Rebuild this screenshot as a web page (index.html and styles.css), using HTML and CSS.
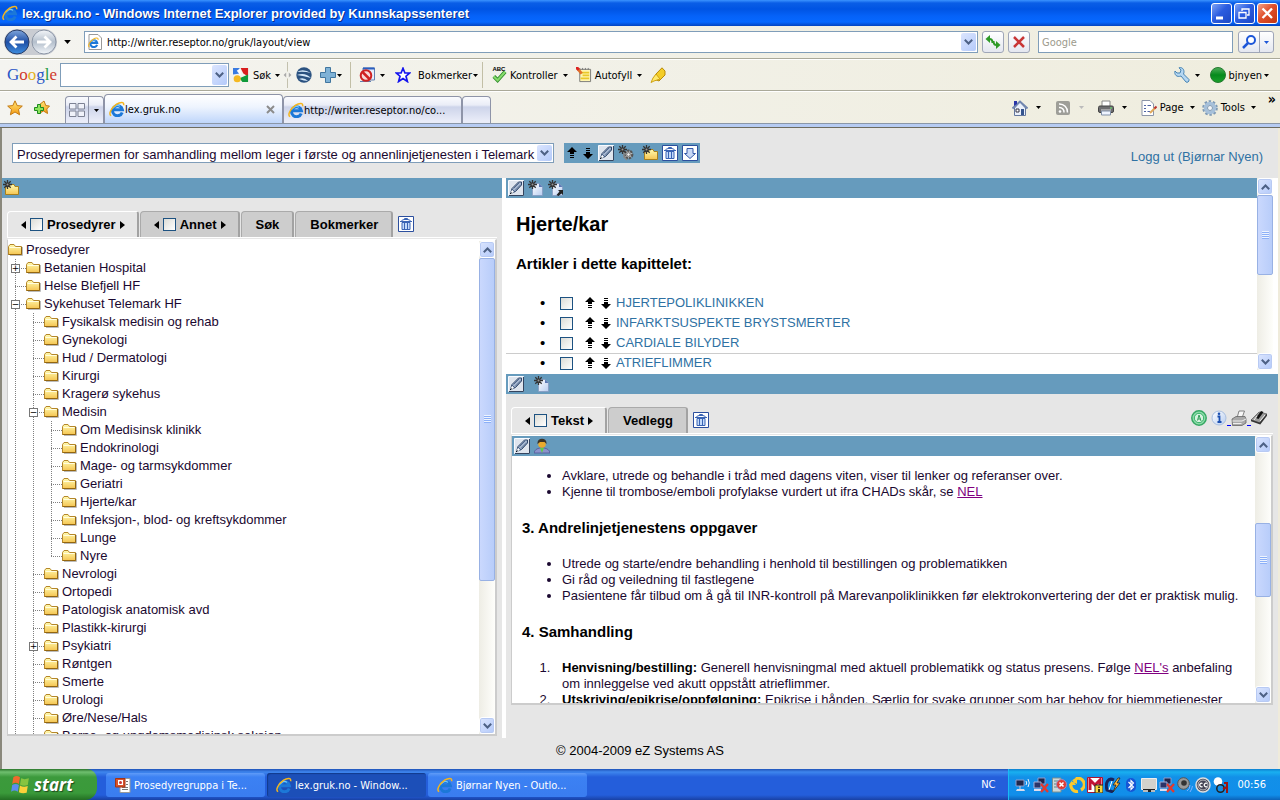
FILE: index.html
```html
<!DOCTYPE html>
<html lang="no">
<head>
<meta charset="utf-8">
<title>lex.gruk.no</title>
<link rel="stylesheet" href="styles.css">
</head>
<body>
<svg class="defs" aria-hidden="true">
  <defs>
    <linearGradient id="gFolder" x1="0" y1="0" x2="0" y2="1"><stop offset="0" stop-color="#fffbb0"/><stop offset="1" stop-color="#f5c552"/></linearGradient>
    <linearGradient id="gBlue" x1="0" y1="0" x2="0" y2="1"><stop offset="0" stop-color="#7fa6dc"/><stop offset=".5" stop-color="#1f4fa6"/><stop offset="1" stop-color="#3f8fe0"/></linearGradient>
    <linearGradient id="gSilver" x1="0" y1="0" x2="0" y2="1"><stop offset="0" stop-color="#f4f6f9"/><stop offset=".5" stop-color="#b4bfcc"/><stop offset="1" stop-color="#f2f6fa"/></linearGradient>
    <linearGradient id="gStar" x1="0" y1="0" x2="0" y2="1"><stop offset="0" stop-color="#ffe77a"/><stop offset="1" stop-color="#f59a10"/></linearGradient>
    <linearGradient id="gPage" x1="0" y1="0" x2="1" y2="1"><stop offset="0" stop-color="#fff"/><stop offset="1" stop-color="#b8cdf0"/></linearGradient>
    <linearGradient id="gGreen" x1="0" y1="0" x2="0" y2="1"><stop offset="0" stop-color="#4fae5a"/><stop offset=".5" stop-color="#068a1c"/><stop offset="1" stop-color="#1ba02c"/></linearGradient>
  </defs>
  <symbol id="ie" viewBox="0 0 16 16"><path d="M13.200 11.400A5 5 0 1 1 13.400 8.800H4.800" fill="none" stroke="#1c78d8" stroke-width="3"/><path d="M4.200 7.400A4.300 4.300 0 0 1 11 5.400" fill="none" stroke="#6fc6ff" stroke-width="1.200"/><path d="M2.200 14.600C-1 13.600 2 7 7.600 3.200 11 1 15.600 .4 14.600 4.200" fill="none" stroke="#f4b51e" stroke-width="1.500"/></symbol>
  <symbol id="folder" viewBox="0 0 16 16"><path d="M2 13.500H14.500V5" fill="none" stroke="#bbb" stroke-width="1"/><path d="M.5 12.500V4.500L2 2.500H6L7.500 4.500H13.500V12.500Z" fill="url(#gFolder)" stroke="#b5872a"/><path d="M1.500 5.500H12.500" stroke="#fffde0"/><path d="M.5 12.500H13.500V5" fill="none" stroke="#94660f"/></symbol>
  <symbol id="spark" viewBox="0 0 9 9"><path d="M4.500 0V9M0 4.500H9M1.300 1.300 7.700 7.700M7.700 1.300 1.300 7.700" stroke="#333" stroke-width="1.300"/><circle cx="4.500" cy="4.500" r="1" fill="#999"/></symbol>
  <symbol id="newfolder" viewBox="0 0 16 16"><path d="M2.500 14.500V7.500L8 4.500H11L12 6.500H15.500V14.500Z" fill="url(#gFolder)" stroke="#a8801c"/><use href="#spark" x="0" y="0" width="9" height="9"/></symbol>
  <symbol id="newpage" viewBox="0 0 16 16"><path d="M4.500 15.500V3.500H11L14.500 7V15.500Z" fill="url(#gPage)" stroke="#8395bd" stroke-width=".7"/><path d="M11 3.500V7H14.500Z" fill="#5b79b5"/><use href="#spark" x="0" y="0" width="9" height="9"/></symbol>
  <symbol id="newlink" viewBox="0 0 16 16"><use href="#newpage" width="16" height="16"/><path d="M8.500 15 11.500 11.500 10 10H15V15L13.500 13.500 10.500 16Z" fill="#222"/></symbol>
  <symbol id="gears" viewBox="0 0 16 16"><circle cx="10.500" cy="9.500" r="3.800" fill="#c8c8c8" stroke="#555" stroke-width="2.200" stroke-dasharray="2.400 .8"/><circle cx="10.500" cy="9.500" r="1.800" fill="#eee" stroke="#555" stroke-width=".8"/><path d="M6 7V12L9 15" fill="none" stroke="#888" stroke-width="1.500"/><use href="#spark" x="0" y="0" width="9" height="9"/></symbol>
  <symbol id="pencil" viewBox="0 0 16 16"><path d="M.5 .5H15.500V15.500H.5Z" fill="#dfe5ee" stroke="#f8faff"/><path d="M1 15.500H15.500V1" fill="none" stroke="#34445e"/><path d="M2.500 13.500 4 8.500 10.500 2H13.500V5L7.500 11.500Z" fill="#a5b6cf" stroke="#2e4568"/><path d="M4 9 7 12M5.500 8.500 11 3M7 10.500 13 4.500" stroke="#39537c" stroke-width=".8"/><path d="M2 14 4 10 6 12Z" fill="#fff"/><path d="M2 14 3.500 12.500" stroke="#111"/></symbol>
  <symbol id="trash" viewBox="0 0 16 16"><path d="M.5 .5H15.500V15.500H.5Z" fill="#fff" stroke="#2c4f9e"/><path d="M4 6.500H12V13.500H4Z" fill="#c3dafa" stroke="#3a64b4"/><path d="M2 5.500H14M3.500 4.500 6 3.500H10L12.500 4.500M6.500 3V2.500H9.500V3M6.500 7V13M9.500 7V13" fill="none" stroke="#3a64b4"/></symbol>
  <symbol id="getdown" viewBox="0 0 16 16"><path d="M.5 .5H15.500V15.500H.5Z" fill="#fff" stroke="#2c4f9e"/><path d="M5 3.500H11V8.500H13.500L8 13.500 2.500 8.500H5Z" fill="#c9d9f5" stroke="#3459a8"/></symbol>
  <symbol id="up" viewBox="0 0 12 14"><path d="M6 1 11 6H8V8H4V6H1ZM4 9H8V10H4ZM4 11H8V12H4Z"/></symbol>
  <symbol id="down" viewBox="0 0 12 14"><path d="M6 13 1 8H4V6H8V8H11ZM4 4H8V5H4ZM4 2H8V3H4Z"/></symbol>
  <symbol id="prev" viewBox="0 0 5 8"><path d="M5 0V8L0 4Z"/></symbol>
  <symbol id="next" viewBox="0 0 5 8"><path d="M0 0V8L5 4Z"/></symbol>
  <symbol id="caret" viewBox="0 0 5 3"><path d="M0 0H5L2.500 3Z"/></symbol>
  <symbol id="chevD" viewBox="0 0 9 6"><path d="M.8 .8 4.500 4.500 8.200 .8" fill="none" stroke="#4d6185" stroke-width="2"/></symbol>
  <symbol id="chevU" viewBox="0 0 9 6"><path d="M.8 5.200 4.500 1.500 8.200 5.200" fill="none" stroke="#4d6185" stroke-width="2"/></symbol>
  <symbol id="person" viewBox="0 0 16 16"><path d="M0 15C1 11 4 10 8 10S15 11 16 15Z" fill="#8b93cc" stroke="#4c4f8f" stroke-width=".7"/><path d="M6 10H10L8 15Z" fill="#5ecb4e"/><circle cx="8" cy="6" r="3.800" fill="#e9aa2e"/><path d="M3.500 6C2.500-1 13.500-1 12.500 6L10.500 4H6Z" fill="#3b3327"/></symbol>
  <symbol id="stamp" viewBox="0 0 16 16"><circle cx="8" cy="8" r="7.200" fill="#8fdcab" stroke="#35a863" stroke-width="1.500"/><circle cx="8" cy="8" r="4.700" fill="#d7f2e0" stroke="#35b368"/><path d="M6.500 10.500 8 5 10 11M7 9H9.500" fill="none" stroke="#2f9f58"/></symbol>
  <symbol id="info" viewBox="0 0 16 16"><circle cx="8" cy="8" r="7" fill="url(#gPage)" stroke="#a9bfe0"/><path d="M6.500 6.500H8.500V12M6.500 12H10.500" fill="none" stroke="#1b4fb0" stroke-width="1.800"/><circle cx="8" cy="3.800" r="1.300" fill="#1b4fb0"/></symbol>
  <symbol id="print" viewBox="0 0 16 16"><path d="M6 8 8 1H13.500L11 8Z" fill="#f7f7f7" stroke="#666" stroke-width=".8"/><path d="M1 9 5 6.500H14L15 9V13L11 15.500H1.500Z" fill="#a9a9a9" stroke="#666" stroke-width=".8"/><path d="M1.500 11H11L15 9M2 13.500H10.500" fill="none" stroke="#eee"/></symbol>
  <symbol id="book" viewBox="0 0 16 16"><path d="M0 10 8 2 16 4 9 13Z" fill="#999" stroke="#555" stroke-width=".7"/><path d="M0 10.500 9 13.500 16 4.500" fill="none" stroke="#333" stroke-width="1.500"/><path d="M5 8 10 1 12.500 2 7.500 9Z" fill="#111"/><path d="M3 10 6 6M9 11 14 5" stroke="#eee"/></symbol>
  <symbol id="gicon" viewBox="0 0 17 17"><path d="M0 1H7V7L0 8Z" fill="#3a7be0"/><path d="M8 1H16V10L11 7Z" fill="#d81e1e"/><path d="M16 8V16H10L7 12Z" fill="#0f9a3a"/><circle cx="4.500" cy="12.500" r="3.800" fill="#f5b921"/><path d="M4 4 8 1V9Z" fill="#fff"/></symbol>
  <symbol id="globe" viewBox="0 0 16 16"><circle cx="8" cy="8" r="7.700" fill="#2b5280"/><path d="M1 5Q7 1 15 6Q8 4 1 5ZM1 8Q9 5 15 11Q8 9 1 8ZM3 12Q8 10 12 14Q8 14 3 12Z" fill="#d5e8f8"/></symbol>
  <symbol id="plus" viewBox="0 0 16 16"><path d="M5.500 .5H10.500V5.500H15.500V10.500H10.500V15.500H5.500V10.500H.5V5.500H5.500Z" fill="#7fb2d6" stroke="#41769f"/></symbol>
  <symbol id="block" viewBox="0 0 16 16"><path d="M4 1H15.500V13H4Z" fill="#e8eefb" stroke="#6480b0"/><path d="M4 1.500H15.500" stroke="#2a5fc0" stroke-width="2"/><path d="M1 14.500H12" stroke="#6480b0"/><circle cx="7" cy="8.500" r="5.300" fill="#f7dada" stroke="#cf2222" stroke-width="2"/><path d="M3.500 5 10.500 12" stroke="#cf2222" stroke-width="2.500"/></symbol>
  <symbol id="starline" viewBox="0 0 16 16"><path d="M8 1.300 9.900 6H14.800L11 9.200 12.400 14.500 8 11.500 3.600 14.500 5 9.200 1.200 6H6.100Z" fill="#fff" stroke="#1414ee" stroke-width="1.700"/></symbol>
  <symbol id="star" viewBox="0 0 16 16"><path d="M8 .8 10.200 5.600 15.300 6.100 11.500 9.500 12.600 14.800 8 12 3.400 14.800 4.500 9.500 .7 6.100 5.800 5.600Z" fill="url(#gStar)" stroke="#c47a12"/></symbol>
  <symbol id="addstar" viewBox="0 0 16 16"><path d="M10 1 11.800 5.600 15.500 6 12.800 9 13.500 13.500 9.500 11 6 13 5 5Z" fill="url(#gStar)" stroke="#c47a12"/><path d="M3.500 4.500H6.500V7.500H9.500V10.500H6.500V13.500H3.500V10.500H.5V7.500H3.500Z" fill="#8ce45c" stroke="#1e8a1e"/></symbol>
  <symbol id="tickabc" viewBox="0 0 17 17"><path d="M3 10 7 14 15 5" fill="none" stroke="#2d8a2a" stroke-width="4"/><path d="M3 10 7 14 15 5" fill="none" stroke="#86db6c" stroke-width="2.200"/></symbol>
  <symbol id="note" viewBox="0 0 17 17"><path d="M4 2.500H15.500V15.500H4Z" fill="#fff5b0" stroke="#777"/><path d="M4 1V3M7 1V3M10 1V3M13 1V3" stroke="#777"/><path d="M5 6H14M7 9H14M5 12H14" stroke="#eac82a" stroke-width="1.800"/><path d="M1 1 6 7" stroke="#e0702a" stroke-width="3"/><path d="M0 0 3 3" stroke="#d22" stroke-width="3"/></symbol>
  <symbol id="marker" viewBox="0 0 16 16"><path d="M6 7 12 .8 15 4V8L9 14 4 12Z" fill="#f4cd27" stroke="#b98a08"/><path d="M6 7 10 12 4 14 1 15.500 3 11Z" fill="#ffe96a" stroke="#cfa214"/></symbol>
  <symbol id="wrench" viewBox="0 0 16 16"><path d="M1 4 3 6H6L7 3 5 .8C9-.5 11 4 9.500 7L15 12.500C15.500 15 13 15.800 12 15L7 9C3 10.500 0 8 1 4Z" fill="#b5d7f2" stroke="#4683b3"/></symbol>
  <symbol id="home" viewBox="0 0 16 16"><path d="M2.500 8V15.500H13.500V8L8 2Z" fill="#eaf0fb" stroke="#63779e"/><path d="M.5 8.500 8 1.500 15.500 8.500" fill="none" stroke="#7186b0" stroke-width="2"/><path d="M2 1H5V4L2 6Z" fill="#2b36a8"/><path d="M4 9H7V12H4Z" fill="#fff" stroke="#334"/><path d="M9 9H12V15H9Z" fill="#35548e"/></symbol>
  <symbol id="rss" viewBox="0 0 16 16"><rect x="1" y="1" width="14" height="14" rx="2" fill="#9e9e98"/><circle cx="5" cy="11.500" r="1.300" fill="#fff"/><path d="M4 7.500A4.500 4.500 0 0 1 9 12.500M4 4A8 8 0 0 1 12.500 12.500" fill="none" stroke="#fff" stroke-width="1.500"/></symbol>
  <symbol id="printer" viewBox="0 0 16 16"><path d="M4 1H12V7H4Z" fill="#fff" stroke="#888"/><rect x=".5" y="6" width="15" height="6.500" rx="1.500" fill="#6d6d70" stroke="#444"/><path d="M3 10H13" stroke="#ddd"/><path d="M3.500 11H12.500V15H3.500Z" fill="#eef4ff" stroke="#8090a8"/><circle cx="13" cy="8" r=".8" fill="#6f6"/></symbol>
  <symbol id="pageedit" viewBox="0 0 16 16"><path d="M1 .5H9L12.500 4V15.500H1Z" fill="#fff" stroke="#8c95a8"/><path d="M3 5.500H5M6.500 5.500H10M3 8.500H5M3 11.500H5M6.500 11.500H9" stroke="#4f64a4"/><path d="M9 13 14.500 7.500" stroke="#e0a85c" stroke-width="2"/><path d="M13.500 8.500 15.500 6.500" stroke="#b33" stroke-width="2"/></symbol>
  <symbol id="gear" viewBox="0 0 16 16"><circle cx="8" cy="8" r="6.500" fill="none" stroke="#7e99b4" stroke-width="2.600" stroke-dasharray="2.400 1.680"/><circle cx="8" cy="8" r="4.500" fill="none" stroke="#a6c0da" stroke-width="3.400"/><circle cx="8" cy="8" r="2.500" fill="#f4f6f8" stroke="#7e99b4"/></symbol>
  <symbol id="winflag" viewBox="0 0 18 18"><path d="M3 2Q6 0 9 2L8 8Q5 6 2 8Z" fill="#ef6a2d"/><path d="M10 3Q13 4.500 17 3L16 9Q12 10.500 9 8.500Z" fill="#86c440"/><path d="M2 9Q5 7 8 9L7 15Q4 13 1 15Z" fill="#5c8df0"/><path d="M9 9.500Q12 11.500 16 10L15 16Q11 17 8 15.500Z" fill="#fbd13a"/></symbol>
  <symbol id="ppt" viewBox="0 0 16 16"><path d="M5 1.500H15V15.500H5Z" fill="#fff" stroke="#999"/><path d="M7 10.500H13M7 12.500H13M11 4.500H13M11 7.500H13" stroke="#777"/><path d="M.5 1.500H10V10H.5Z" fill="#d8532c" stroke="#a33313"/><path d="M3 3H8V8H3Z" fill="#fff"/><circle cx="5.500" cy="5.500" r="1.500" fill="#c33"/></symbol>
  <symbol id="net" viewBox="0 0 16 16"><path d="M1 3H9V9H1Z" fill="#20264a" stroke="#8c9ccc"/><path d="M2 12H9L10 14H1Z" fill="#d8dcec"/><path d="M5 9V12" stroke="#ccd"/><path d="M11 4Q12.500 6 11 8M13 2Q15.500 6 13 10" fill="none" stroke="#e8f0ff"/></symbol>
  <symbol id="netx" viewBox="0 0 16 16"><path d="M5 1H12V7H5Z" fill="#20264a" stroke="#8c9ccc"/><path d="M1 5H8V11H1Z" fill="#2b3468" stroke="#a4b0d8"/><path d="M1 13H8" stroke="#dde" stroke-width="2"/><path d="M8 7 15 15M15 7 8 15" stroke="#e43a2e" stroke-width="2.300"/></symbol>
  <symbol id="devx" viewBox="0 0 16 16"><path d="M1.500 1H10V15H1.500Z" fill="#cfd8d8" stroke="#7a9090"/><path d="M3 4H8M3 7H6M3 10H6" stroke="#5a8a8a"/><circle cx="10.500" cy="7.500" r="5" fill="#de3d35" stroke="#a8b"/><path d="M8.500 5.500 12.500 9.500M12.500 5.500 8.500 9.500" stroke="#fff" stroke-width="1.600"/></symbol>
  <symbol id="sync" viewBox="0 0 16 16"><path d="M7 1.500A6.300 6.300 0 0 1 12 13M9 14.500A6.300 6.300 0 0 1 2 7" fill="none" stroke="#fcc92c" stroke-width="3.200"/><path d="M8 0V7L2 4ZM0 8H7L3 3Z" fill="#fcc92c"/></symbol>
  <symbol id="mcafee" viewBox="0 0 16 16"><path d="M.5 .5H15.500V15.500H.5Z" fill="#fff" stroke="#aa1530"/><path d="M3 13V3L8 8 13 3V13" fill="none" stroke="#c11334" stroke-width="3"/><path d="M8 8H16V16H8Z" fill="#f8d43a" stroke="#222"/><path d="M12 9.500V11M12 12V15" stroke="#111" stroke-width="1.600"/></symbol>
  <symbol id="bolt" viewBox="0 0 16 16"><path d="M9 3C3 0 0 6 2 13L8 15" fill="none" stroke="#16245e" stroke-width="3"/><path d="M4 13 7 4" stroke="#fff"/><path d="M13 1 8 8H11L8 15 15 6H12L15 1Z" fill="#ffb83a" stroke="#222" stroke-width=".8"/></symbol>
  <symbol id="bt" viewBox="0 0 16 16"><rect x="3" y="1" width="10" height="14" rx="5" fill="#1556d6"/><path d="M5.500 5 10.500 10 8 12.500V3.500L10.500 6 5.500 11" fill="none" stroke="#fff" stroke-width="1.100"/></symbol>
  <symbol id="monitor" viewBox="0 0 16 16"><path d="M.5 1.500H15.500V12.500H.5Z" fill="#d2d2cc" stroke="#eee"/><path d="M2 12H14V15H2Z" fill="#222"/><path d="M2 14H7M10 14H14" stroke="#eee" stroke-width="1.500"/></symbol>
  <symbol id="speaker" viewBox="0 0 16 16"><circle cx="6.500" cy="6.500" r="5.800" fill="#999" stroke="#555"/><circle cx="7" cy="6" r="2.800" fill="#333"/><path d="M10 14Q13 12 13 8M13 15Q15 12 15.500 9" fill="none" stroke="#7fb0ff"/></symbol>
  <symbol id="cc" viewBox="0 0 16 16"><circle cx="8" cy="8" r="7" fill="#445" stroke="#ddd" stroke-width="1.500"/><circle cx="8" cy="8" r="5" fill="none" stroke="#ddd" stroke-width=".8"/><path d="M7.500 6.500A1.800 1.800 0 1 0 7.500 9.500M12 6.500A1.800 1.800 0 1 0 12 9.500" fill="none" stroke="#fff" stroke-width="1.300"/></symbol>
  <symbol id="magnify" viewBox="0 0 16 16"><circle cx="5" cy="4.500" r="4.300" fill="#fff"/><circle cx="7.500" cy="11.500" r="3.700" fill="none" stroke="#222" stroke-width="1.500"/><path d="M11 6H14V16M10 12 14 10" fill="none" stroke="#9c1414" stroke-width="2"/></symbol>
</svg>

<header class="titlebar">
  <svg class="ic"><use href="#ie"/></svg>
  <h1>lex.gruk.no - Windows Internet Explorer provided by Kunnskapssenteret</h1>
  <div class="winbtns">
    <button aria-label="Minimize"><svg viewBox="0 0 19 19"><path d="M4 14H11" stroke="#fff" stroke-width="3"/></svg></button>
    <button aria-label="Restore"><svg viewBox="0 0 19 19"><path d="M7 7V5H14V11H12M4 8.500H11V14H4Z" fill="none" stroke="#fff" stroke-width="1.300"/></svg></button>
    <button class="close" aria-label="Close"><svg viewBox="0 0 19 19"><path d="M4.500 4.500 14 14M14 4.500 4.500 14" stroke="#fff" stroke-width="2.300"/></svg></button>
  </div>
</header>

<nav class="bar address">
  <div class="travel">
    <button aria-label="Back"><svg viewBox="0 0 26 26"><circle cx="13" cy="13" r="12" fill="url(#gBlue)" stroke="#2a3d66"/><path d="M20 13H7M12.500 7.500 7 13 12.500 18.500" fill="none" stroke="#fff" stroke-width="2.800"/></svg></button>
    <button aria-label="Forward"><svg viewBox="0 0 26 26"><circle cx="13" cy="13" r="12" fill="url(#gSilver)" stroke="#8c96a6"/><path d="M6 13H19M13.500 7.500 19 13 13.500 18.500" fill="none" stroke="#fff" stroke-width="2.800"/></svg></button>
  </div>
  <button class="plain" aria-label="Recent pages"><svg class="big"><use href="#caret"/></svg></button>
  <div class="field url">
    <svg class="ic" viewBox="0 0 16 16"><path d="M2 .5H11L14.500 4V15.500H2Z" fill="#fff" stroke="#999"/><use href="#ie" x="1" y="3" width="11" height="11"/></svg>
    <input type="text" aria-label="Address" value="http://writer.reseptor.no/gruk/layout/view">
    <button class="drop" aria-label="Show addresses"><svg><use href="#chevD"/></svg></button>
  </div>
  <button class="sq" aria-label="Refresh"><svg viewBox="0 0 16 16"><path d="M.5 5 5 1V9ZM15.500 11 11 7V15Z" fill="#2f9a28"/><path d="M4 5Q7.500 4.500 7.500 9M12 11Q8.500 11.500 8.500 7" fill="none" stroke="#2f9a28" stroke-width="2"/></svg></button>
  <button class="sq" aria-label="Stop"><svg viewBox="0 0 16 16"><path d="M3 3 13 13M13 3 3 13" stroke="#c93636" stroke-width="2.500"/></svg></button>
  <div class="field search"><input type="text" aria-label="Search" placeholder="Google"></div>
  <div class="pair">
    <button aria-label="Search"><svg viewBox="0 0 16 16"><circle cx="10" cy="6" r="4" fill="#fff" stroke="#1c56d8" stroke-width="2"/><path d="M7 9 2 14" stroke="#1c56d8" stroke-width="2.500"/></svg></button>
    <button class="narrow" aria-label="Search options"><svg class="c"><use href="#caret"/></svg></button>
  </div>
</nav>

<nav class="bar google">
  <span class="logo"><b class="b">G</b><b class="r">o</b><b class="y">o</b><b class="b">g</b><b class="g">l</b><b class="r">e</b></span>
  <div class="field combo"><input type="text" aria-label="Google search"><button class="drop" aria-label="Earlier searches"><svg><use href="#chevD"/></svg></button></div>
  <button class="plain sok"><svg class="ic"><use href="#gicon"/></svg>Søk<svg class="c"><use href="#caret"/></svg></button>
  <svg class="grip" viewBox="0 0 9 30"><path d="M3 12V18L0 15ZM6 12V18L9 15Z" fill="#aaa"/><path d="M4.500 0V11M4.500 19V30" stroke="#bbb8a4"/></svg>
  <button class="plain" aria-label="Earth"><svg class="ic"><use href="#globe"/></svg></button>
  <button class="plain addg" aria-label="Add"><svg class="ic"><use href="#plus"/></svg><svg class="c"><use href="#caret"/></svg></button>
  <span class="sep"></span>
  <button class="plain wide" aria-label="Pop-ups"><svg class="ic"><use href="#block"/></svg><svg class="c"><use href="#caret"/></svg></button>
  <button class="plain book"><svg class="ic"><use href="#starline"/></svg><span>Bokmerker</span><svg class="c"><use href="#caret"/></svg></button>
  <span class="sep tight"></span>
  <button class="plain check"><span class="abc"><svg class="ic"><use href="#tickabc"/></svg><small>ABC</small></span>Kontroller<svg class="c"><use href="#caret"/></svg></button>
  <button class="plain check"><svg class="ic"><use href="#note"/></svg>Autofyll<svg class="c"><use href="#caret"/></svg></button>
  <button class="plain" aria-label="Highlight"><svg class="ic"><use href="#marker"/></svg></button>
  <span class="grow"></span>
  <button class="plain wide" aria-label="Settings"><svg class="ic"><use href="#wrench"/></svg><svg class="c"><use href="#caret"/></svg></button>
  <button class="plain user"><svg class="ic" viewBox="0 0 16 16"><circle cx="8" cy="8" r="7.500" fill="url(#gGreen)" stroke="#267a30"/></svg>bjnyen<svg class="c"><use href="#caret"/></svg></button>
</nav>

<nav class="bar tabsbar">
  <button class="plain" aria-label="Favorites"><svg class="ic"><use href="#star"/></svg></button>
  <button class="plain fav" aria-label="Add favorite"><svg class="ic"><use href="#addstar"/></svg></button>
  <div class="tabrow">
    <button class="btab quick" aria-label="Quick tabs"><svg class="ic" viewBox="0 0 16 16"><path d="M.5 1.500H7V7H.5ZM9 1.500H15.500V7H9ZM.5 9H7V14.500H.5ZM9 9H15.500V14.500H9Z" fill="#f0f2fa" stroke="#7d8294"/></svg></button>
    <button class="btab qd" aria-label="Tab list"><svg class="c"><use href="#caret"/></svg></button>
    <button class="btab page on"><svg class="ic"><use href="#ie"/></svg>lex.gruk.no<svg class="x" viewBox="0 0 9 9"><path d="M1 1 8 8M8 1 1 8" stroke="#8c8c8c" stroke-width="2"/></svg></button>
    <button class="btab page"><svg class="ic"><use href="#ie"/></svg>http://writer.reseptor.no/co...</button>
    <button class="btab new" aria-label="New tab"></button>
  </div>
  <span class="grow"></span>
  <div class="cmds">
    <button class="plain wide2" aria-label="Home"><svg class="ic"><use href="#home"/></svg><svg class="c"><use href="#caret"/></svg></button>
    <button class="plain wide2 off" aria-label="Feeds"><svg class="ic"><use href="#rss"/></svg><svg class="c"><use href="#caret"/></svg></button>
    <button class="plain wide2" aria-label="Print"><svg class="ic"><use href="#printer"/></svg><svg class="c"><use href="#caret"/></svg></button>
    <button class="plain cmd"><svg class="ic"><use href="#pageedit"/></svg>Page<svg class="c"><use href="#caret"/></svg></button>
    <button class="plain cmd"><svg class="ic"><use href="#gear"/></svg>Tools<svg class="c"><use href="#caret"/></svg></button>
    <span class="more">»</span>
  </div>
</nav>

<main class="site">
  <div class="top">
    <div class="picker">
      <select aria-label="Perm"><option>Prosedyrepermen for samhandling mellom leger i første og annenlinjetjenesten i Telemark</option></select>
      <span class="drop"><svg><use href="#chevD"/></svg></span>
    </div>
    <div class="tools">
      <button aria-label="Flytt opp"><svg class="ar"><use href="#up"/></svg></button>
      <button aria-label="Flytt ned"><svg class="ar"><use href="#down"/></svg></button>
      <button aria-label="Rediger"><svg class="ic"><use href="#pencil"/></svg></button>
      <button aria-label="Innstillinger"><svg class="ic"><use href="#gears"/></svg></button>
      <button class="apart" aria-label="Ny mappe"><svg class="ic"><use href="#newfolder"/></svg></button>
      <button aria-label="Slett"><svg class="ic"><use href="#trash"/></svg></button>
      <button aria-label="Last ned"><svg class="ic"><use href="#getdown"/></svg></button>
    </div>
    <a class="logout" href="#">Logg ut (Bjørnar Nyen)</a>
  </div>

  <div class="split">
    <section class="left">
      <div class="blue"><button aria-label="Ny mappe"><svg class="ic"><use href="#newfolder"/></svg></button></div>
      <div class="tabs">
        <div class="tab on"><svg class="tri"><use href="#prev"/></svg><label><input type="checkbox">Prosedyrer</label><svg class="tri"><use href="#next"/></svg></div>
        <div class="tab"><svg class="tri"><use href="#prev"/></svg><label><input type="checkbox">Annet</label><svg class="tri"><use href="#next"/></svg></div>
        <button class="tab">Søk</button>
        <button class="tab">Bokmerker</button>
        <button class="bin" aria-label="Slett"><svg class="ic"><use href="#trash"/></svg></button>
      </div>
      <div class="frame">
        <div class="scroll tree">
          <div class="row"><svg class="ic"><use href="#folder"/></svg>Prosedyrer</div>
          <ul>
            <li><div class="row"><i><button aria-label="Åpne">+</button></i><svg class="ic"><use href="#folder"/></svg>Betanien Hospital</div></li>
            <li><div class="row"><i></i><svg class="ic"><use href="#folder"/></svg>Helse Blefjell HF</div></li>
            <li><div class="row"><i><button aria-label="Lukk">−</button></i><svg class="ic"><use href="#folder"/></svg>Sykehuset Telemark HF</div>
              <ul>
                <li><div class="row"><i></i><svg class="ic"><use href="#folder"/></svg>Fysikalsk medisin og rehab</div></li>
                <li><div class="row"><i></i><svg class="ic"><use href="#folder"/></svg>Gynekologi</div></li>
                <li><div class="row"><i></i><svg class="ic"><use href="#folder"/></svg>Hud / Dermatologi</div></li>
                <li><div class="row"><i></i><svg class="ic"><use href="#folder"/></svg>Kirurgi</div></li>
                <li><div class="row"><i></i><svg class="ic"><use href="#folder"/></svg>Kragerø sykehus</div></li>
                <li><div class="row"><i><button aria-label="Lukk">−</button></i><svg class="ic"><use href="#folder"/></svg>Medisin</div>
                  <ul>
                    <li><div class="row"><i></i><svg class="ic"><use href="#folder"/></svg>Om Medisinsk klinikk</div></li>
                    <li><div class="row"><i></i><svg class="ic"><use href="#folder"/></svg>Endokrinologi</div></li>
                    <li><div class="row"><i></i><svg class="ic"><use href="#folder"/></svg>Mage- og tarmsykdommer</div></li>
                    <li><div class="row"><i></i><svg class="ic"><use href="#folder"/></svg>Geriatri</div></li>
                    <li><div class="row"><i></i><svg class="ic"><use href="#folder"/></svg>Hjerte/kar</div></li>
                    <li><div class="row"><i></i><svg class="ic"><use href="#folder"/></svg>Infeksjon-, blod- og kreftsykdommer</div></li>
                    <li><div class="row"><i></i><svg class="ic"><use href="#folder"/></svg>Lunge</div></li>
                    <li class="last"><div class="row"><i></i><svg class="ic"><use href="#folder"/></svg>Nyre</div></li>
                  </ul>
                </li>
                <li><div class="row"><i></i><svg class="ic"><use href="#folder"/></svg>Nevrologi</div></li>
                <li><div class="row"><i></i><svg class="ic"><use href="#folder"/></svg>Ortopedi</div></li>
                <li><div class="row"><i></i><svg class="ic"><use href="#folder"/></svg>Patologisk anatomisk avd</div></li>
                <li><div class="row"><i></i><svg class="ic"><use href="#folder"/></svg>Plastikk-kirurgi</div></li>
                <li><div class="row"><i><button aria-label="Åpne">+</button></i><svg class="ic"><use href="#folder"/></svg>Psykiatri</div></li>
                <li><div class="row"><i></i><svg class="ic"><use href="#folder"/></svg>Røntgen</div></li>
                <li><div class="row"><i></i><svg class="ic"><use href="#folder"/></svg>Smerte</div></li>
                <li><div class="row"><i></i><svg class="ic"><use href="#folder"/></svg>Urologi</div></li>
                <li><div class="row"><i></i><svg class="ic"><use href="#folder"/></svg>Øre/Nese/Hals</div></li>
                <li><div class="row"><i></i><svg class="ic"><use href="#folder"/></svg>Barne- og ungdomsmedisinsk seksjon</div></li>
              </ul>
            </li>
          </ul>
        </div>
        <div class="sbar"><button aria-label="Opp"><svg><use href="#chevU"/></svg></button><span class="thumb t1"></span><span class="rest r1"></span><button aria-label="Ned"><svg><use href="#chevD"/></svg></button></div>
      </div>
    </section>

    <section class="right">
      <div class="chapter">
        <div class="scroll">
          <div class="blue">
            <button aria-label="Rediger"><svg class="ic"><use href="#pencil"/></svg></button>
            <button aria-label="Ny side"><svg class="ic"><use href="#newpage"/></svg></button>
            <button aria-label="Ny lenke"><svg class="ic"><use href="#newlink"/></svg></button>
          </div>
          <article class="toc">
            <h2>Hjerte/kar</h2>
            <h3>Artikler i dette kapittelet:</h3>
            <ul>
              <li><input type="checkbox" aria-label="Velg HJERTEPOLIKLINIKKEN"><svg class="ar"><use href="#up"/></svg><svg class="ar"><use href="#down"/></svg><a href="#">HJERTEPOLIKLINIKKEN</a></li>
              <li><input type="checkbox" aria-label="Velg INFARKTSUSPEKTE BRYSTSMERTER"><svg class="ar"><use href="#up"/></svg><svg class="ar"><use href="#down"/></svg><a href="#">INFARKTSUSPEKTE BRYSTSMERTER</a></li>
              <li><input type="checkbox" aria-label="Velg CARDIALE BILYDER"><svg class="ar"><use href="#up"/></svg><svg class="ar"><use href="#down"/></svg><a href="#">CARDIALE BILYDER</a></li>
              <li><input type="checkbox" aria-label="Velg ATRIEFLIMMER"><svg class="ar"><use href="#up"/></svg><svg class="ar"><use href="#down"/></svg><a href="#">ATRIEFLIMMER</a></li>
            </ul>
          </article>
        </div>
        <div class="sbar"><button aria-label="Opp"><svg><use href="#chevU"/></svg></button><span class="thumb t2"></span><span class="rest r2"></span><button aria-label="Ned"><svg><use href="#chevD"/></svg></button></div>
      </div>
      <div class="blue second">
        <button aria-label="Rediger"><svg class="ic"><use href="#pencil"/></svg></button>
        <button aria-label="Ny side"><svg class="ic"><use href="#newpage"/></svg></button>
      </div>
      <div class="article">
        <div class="tabs">
          <div class="tab on"><svg class="tri"><use href="#prev"/></svg><label><input type="checkbox">Tekst</label><svg class="tri"><use href="#next"/></svg></div>
          <button class="tab">Vedlegg</button>
          <button class="bin" aria-label="Slett"><svg class="ic"><use href="#trash"/></svg></button>
          <span class="grow"></span>
          <div class="links">
            <a href="#" aria-label="Stempel"><svg class="ic"><use href="#stamp"/></svg></a>
            <a href="#" aria-label="Info"><svg class="ic"><use href="#info"/></svg></a>
            <a href="#" class="ul" aria-label="Skriv ut"><svg class="ic"><use href="#print"/></svg></a>
            <a href="#" class="ul" aria-label="Bok"><svg class="ic"><use href="#book"/></svg></a>
          </div>
        </div>
        <div class="frame">
          <div class="scroll">
            <div class="blue">
              <button aria-label="Rediger"><svg class="ic"><use href="#pencil"/></svg></button>
              <button aria-label="Bruker"><svg class="ic"><use href="#person"/></svg></button>
            </div>
            <article class="text">
              <ul>
                <li>Avklare, utrede og behandle i tråd med dagens viten, viser til lenker og referanser over.</li>
                <li>Kjenne til trombose/emboli profylakse vurdert ut ifra CHADs skår, se <a href="#">NEL</a></li>
              </ul>
              <h3>3. Andrelinjetjenestens oppgaver</h3>
              <ul>
                <li>Utrede og starte/endre behandling i henhold til bestillingen og problematikken</li>
                <li>Gi råd og veiledning til fastlegene</li>
                <li>Pasientene får tilbud om å gå til INR-kontroll på Marevanpoliklinikken før elektrokonvertering der det er praktisk mulig.</li>
              </ul>
              <h3>4. Samhandling</h3>
              <ol>
                <li><b>Henvisning/bestilling:</b> Generell henvisningmal med aktuell problematikk og status presens. Følge <a href="#">NEL's</a> anbefaling om innleggelse ved akutt oppstått atrieflimmer.</li>
                <li><b>Utskriving/epikrise/oppfølgning:</b> Epikrise i hånden. Særlig for svake grupper som har behov for hjemmetjenester</li>
              </ol>
            </article>
          </div>
          <div class="sbar"><button aria-label="Opp"><svg><use href="#chevU"/></svg></button><span class="rest r3"></span><span class="thumb t3"></span><span class="rest r4"></span><button aria-label="Ned"><svg><use href="#chevD"/></svg></button></div>
        </div>
      </div>
    </section>
  </div>
  <footer>© 2004-2009 eZ Systems AS</footer>
</main>

<div class="taskbar">
  <button class="start"><svg><use href="#winflag"/></svg>start</button>
  <div class="tasks">
    <button><svg class="ic"><use href="#ppt"/></svg>Prosedyregruppa i Te...</button>
    <button class="on"><svg class="ic"><use href="#ie"/></svg>lex.gruk.no - Window...</button>
    <button><svg class="ic"><use href="#ie"/></svg>Bjørnar Nyen - Outlo...</button>
  </div>
  <span class="grow"></span>
  <span class="lang">NC</span>
  <div class="tray">
    <svg class="ic"><use href="#net"/></svg><svg class="ic"><use href="#netx"/></svg><svg class="ic"><use href="#devx"/></svg><svg class="ic"><use href="#sync"/></svg><svg class="ic"><use href="#mcafee"/></svg><svg class="ic"><use href="#bolt"/></svg><svg class="ic"><use href="#bt"/></svg><svg class="ic"><use href="#monitor"/></svg><svg class="ic"><use href="#netx"/></svg><svg class="ic"><use href="#speaker"/></svg><svg class="ic"><use href="#cc"/></svg><svg class="ic"><use href="#magnify"/></svg>
    <time>00:56</time>
  </div>
</div>
</body>
</html>
```
FILE: styles.css
```css
* { box-sizing: border-box; }
body {
  margin: 0;
  height: 100vh;
  display: flex;
  flex-direction: column;
  overflow: hidden;
  background: #efedde;
  font-family: "DejaVu Sans Condensed", "DejaVu Sans", sans-serif;
  font-size: 11px;
  color: #000;
}
button { border: 0; padding: 0; margin: 0; background: none; font: inherit; color: inherit; display: flex; align-items: center; justify-content: center; flex: none; }
input, select { font: inherit; margin: 0; }
svg { display: block; flex: none; }
.defs { position: absolute; width: 0; height: 0; }
.ic { width: 16px; height: 16px; }
.c { width: 5px; height: 3px; }
.big { width: 7px; height: 4px; }
.grow { flex: 1; }

.titlebar { flex: none; height: 26px; display: flex; align-items: center; gap: 4px; padding: 0 2px 0 2px; background: linear-gradient(#3b93ff 0, #0a5ee6 3px, #0054e3 9px, #0562f8 16px, #0668ff 22px, #0344c0 26px); color: #fff; }
.titlebar h1 { margin: 0; flex: 1; font: bold 13px "Liberation Sans", Arial, sans-serif; text-shadow: 1px 1px 0 #0a2c86; white-space: nowrap; }
.winbtns { display: flex; gap: 2px; }
.winbtns button { width: 21px; height: 21px; border: 1px solid #fff; border-radius: 3px; background: linear-gradient(135deg, #7fa4f5, #2b5de0 45%, #1c48c4); }
.winbtns svg { width: 19px; height: 19px; }
.winbtns .close { background: linear-gradient(135deg, #f2a288, #e0502c 45%, #c23610); }

.bar { flex: none; display: flex; align-items: center; height: 32px; background: linear-gradient(90deg, #f4f4f0, #efedde); }
.plain { gap: 4px; white-space: nowrap; }
.field { display: flex; align-items: center; height: 22px; border: 1px solid #7f9db9; background: #fff; }
.field input { flex: 1; min-width: 0; border: 0; outline: 0; padding: 0; background: none; }
.field input::placeholder { color: #9c9a8c; opacity: 1; }
.drop { display: flex; align-items: center; justify-content: center; flex: none; width: 15px; height: 18px; margin: 0 1px; border-radius: 2px; background: linear-gradient(135deg, #dbe5fe, #b4cafa); }
.drop svg { width: 9px; height: 6px; }

.address { height: 33px; padding: 0 6px 0 4px; border-bottom: 1px solid #aaa999; }
.travel { display: flex; gap: 1px; height: 26px; border-radius: 13px; background: #c9ccd2; }
.travel svg { width: 26px; height: 26px; }
.address > .plain { width: 21px; }
.url { flex: 1; margin: 0 4px 0 6px; padding-left: 2px; gap: 4px; }
.sq { width: 22px; height: 22px; margin-right: 4px; border: 1px solid #9fa6b8; border-radius: 3px; background: linear-gradient(#fff, #e4e7f0); }
.sq svg, .pair svg { width: 16px; height: 16px; }
.search { width: 195px; margin: 0 5px 0 4px; padding-left: 3px; }
.pair { display: flex; height: 22px; border: 1px solid #9fa6b8; border-radius: 3px; background: linear-gradient(#fff, #e4e7f0); }
.pair button { width: 20px; }
.pair .narrow { width: 14px; border-left: 1px solid #9fa6b8; }
.pair .c { width: 5px; height: 3px; fill: #1c56d8; }

.google { padding: 0 11px 0 7px; border-top: 1px solid #fff; border-bottom: 1px solid #aaa999; }
.logo { width: 53px; font: 17px "Liberation Serif", serif; }
.logo b { font-weight: normal; }
.logo .b { color: #2a56c6; } .logo .r { color: #d03a2c; } .logo .y { color: #e2b01c; } .logo .g { color: #1f9a44; }
.combo { width: 169px; height: 24px; margin-right: 4px; padding-left: 2px; }
.combo .drop { height: 20px; }
.sok { margin-right: 3px; }
.grip { width: 9px; height: 26px; margin-right: 4px; }
.addg { gap: 1px; margin-left: 8px; }
.google .sep { width: 1px; height: 26px; margin: 0 8px; background: #c2bfa6; }
.google .tight { margin-left: 4px; }
.wide { gap: 5px; margin-right: 10px; }
.book { gap: 1px; }
.book span { margin-left: 6px; }
.check { margin-right: 8px; gap: 3px; }
.check .c { margin-left: 2px; }
.abc { display: grid; }
.abc > * { grid-area: 1 / 1; }
.abc small { font: bold 6px "Liberation Sans", sans-serif; align-self: start; margin-top: -1px; }
.user { gap: 2px; }

.tabsbar { height: 37px; padding: 0 4px 0 7px; border-top: 1px solid #fff; border-bottom: 1px solid #6d6b5e; align-items: stretch; background: linear-gradient(90deg, #f4f4f0, #efedde); box-shadow: inset 0 -3px #b6cbf2, inset 0 -4px #8a97a8; }
.tabsbar > .plain { height: 31px; }
.tabsbar .fav { margin: 0 15px 0 11px; }
.tabrow { display: flex; align-items: flex-end; padding-bottom: 4px; }
.btab { height: 27px; border: 1px solid #8e94a8; border-bottom: 0; border-radius: 4px 4px 0 0; background: linear-gradient(#fafbfe 0, #eaedf7 8px, #cdd4ea 10px, #e9ecf8 24px); justify-content: flex-start; padding: 0 4px; white-space: nowrap; }
.quick { width: 24px; padding: 0; justify-content: center; border-radius: 4px 0 0 0; }
.qd { width: 15px; padding: 0; justify-content: center; border-left: 0; border-radius: 0 4px 0 0; }
.page { width: 179px; }
.page.on { height: 29px; background: linear-gradient(#fff 0, #eef4fe 12px, #bfd6fb 28px); }
.page .x { width: 9px; height: 9px; margin-left: auto; margin-right: 3px; }
.new { width: 29px; }
.cmds { display: flex; height: 31px; align-items: center; }
.wide2 { gap: 8px; margin-right: 14px; }
.off .c { fill: #bbb; }
.cmd { margin-right: 7px; gap: 3px; }
.cmd .c { margin-left: 3px; }
.more { align-self: flex-start; margin-left: 5px; font-size: 14px; font-weight: bold; line-height: 14px; }

.site { flex: 1; min-height: 0; display: flex; flex-direction: column; background: #e6e6e6; border-left: 2px solid #8a887c; border-right: 2px solid #efebdb; font: 13px/18px "Liberation Sans", Arial, sans-serif; }
.site a { color: #2f71a3; text-decoration: none; }
.top { flex: none; height: 50px; display: flex; align-items: center; padding: 0 15px 0 10px; }
.picker { display: flex; align-items: center; width: 542px; height: 20px; border: 1px solid #7f9db9; background: #fff; }
.picker select { flex: 1; min-width: 0; appearance: none; border: 0; outline: 0; padding: 2px 0 0 4px; background: none; color: #1a0830; height: 18px; }
.picker .drop { height: 16px; }
.tools { display: flex; align-items: center; height: 20px; margin-left: 10px; padding: 0 2px; gap: 4px; background: #669bbd; }
.tools .apart { margin-left: 4px; }
.ar { width: 12px; height: 14px; }
.logout { margin-left: auto; padding-top: 8px; }

.split { flex: 1; min-height: 0; display: grid; grid-template-columns: 125fr 193fr; gap: 4px; background: #fff; }
.left, .right { display: flex; flex-direction: column; min-width: 0; min-height: 0; background: #e6e6e6; }
.blue { flex: none; display: flex; align-items: center; gap: 4px; height: 20px; padding-left: 2px; background: #669bbd; }
.left > .blue { padding-left: 1px; }
.second { gap: 10px; }

.tabs { flex: none; display: flex; align-items: flex-end; height: 40px; margin: 0 5px; gap: 1px; border-bottom: 1px solid #fff; }
.tab { display: flex; align-items: center; height: 26px; gap: 4px; padding: 0 12px 0 13px; font-weight: bold; line-height: 18px; background: #cdcdcd; border: 1px solid #aaa; border-bottom: 0; border-right: 2px solid #a2a2a2; border-radius: 4px 3px 0 0; }
button.tab { padding: 0 13px 0 14px; }
.tab.on { background: #e6e6e6; border-color: #fff #a2a2a2 #fff #fff; }
.tab label { display: flex; align-items: center; gap: 4px; }
.tri { width: 5px; height: 8px; }
.bin { margin: 0 0 5px 4px; }
input[type="checkbox"] { appearance: none; flex: none; width: 13px; height: 13px; border: 1px solid #1d5281; background: linear-gradient(135deg, #dcdcd6, #fff); }

.frame { flex: 1; min-height: 0; display: flex; margin: 1px 5px 2px; border: 1px solid #ccc; border-top-color: #fff; border-right: 2px solid #ccc; border-bottom: 2px solid #ccc; background: #fff; }
.left .frame { padding-top: 1px; }
.scroll { flex: 1; min-width: 0; overflow: hidden; }
.tree { color: #1a0830; }
.tree ul { list-style: none; margin: 0; padding: 0; }
.tree ul ul { margin-left: 18px; }
.tree li { background: repeating-linear-gradient(#808080 0 1px, transparent 1px 2px) 7px 0 / 1px 100% no-repeat; }
.tree li.last { background-size: 1px 9px; }
.row { display: flex; align-items: center; height: 18px; white-space: nowrap; }
.row .ic { margin-right: 2px; }
.row i { display: flex; align-items: center; width: 18px; height: 18px; padding-left: 3px; background: repeating-linear-gradient(90deg, #808080 0 1px, transparent 1px 2px) 7px 9px / 11px 1px no-repeat; }
.row i button { width: 9px; height: 9px; border: 1px solid #777; background: #fff; font: 9px/7px "DejaVu Sans", sans-serif; color: #000; }

.sbar { flex: none; display: flex; flex-direction: column; width: 16px; background: linear-gradient(90deg, #eeede5, #fefefb); }
.sbar button { height: 17px; border: 1px solid #fff; border-radius: 3px; background: linear-gradient(135deg, #dbe5fe, #b4cafa); box-shadow: inset 0 0 0 1px #b8caf3; }
.sbar svg { width: 9px; height: 6px; }
.thumb { border: 1px solid #98b1e4; border-radius: 2px; background: repeating-linear-gradient(#eef4fe 0 1px, #8cb0f8 1px 2px) center / 7px 8px no-repeat, linear-gradient(90deg, #cad8fd, #b8cdfa); }
.t1 { flex: 323; } .r1 { flex: 137; }
.t2 { flex: 79; } .r2 { flex: 79; }
.r3 { flex: 70; } .t3 { flex: 72; } .r4 { flex: 89; }

.chapter { flex: none; height: 196px; display: flex; padding: 0 5px 4px 0; background: #fff; }
.toc { height: 156px; padding: 14px 0 0 10px; border-bottom: 1px solid #ccc; }
.toc h2 { margin: 0 0 16px; font-size: 20px; line-height: 24px; }
.toc h3 { margin: 0 0 17px; font-size: 15px; line-height: 24px; }
.toc ul { margin: 0; padding-left: 24px; list-style: none; }
.toc li { display: flex; align-items: center; height: 20px; gap: 4px; line-height: 20px; }
.toc li::before { content: "•"; width: 16px; font-size: 15px; }
.toc input { margin: 0 7px 0 0; }

.article { flex: 1; min-height: 0; display: flex; flex-direction: column; }
.article .frame { margin-bottom: 33px; }
.links { display: flex; align-items: center; margin: 0 6px 7px 0; }
.links a { display: flex; margin-left: 4px; }
.links .ul { margin-left: 0; }
.links .ul::before { content: ""; align-self: flex-end; width: 4px; height: 1px; background: #00f; }
.text { padding: 12px 6px 0 50px; line-height: 16px; color: #1a0830; }
.text ul, .text ol { margin: 0; padding: 0; }
.text h3 { margin: 18px 0 18px -40px; font-size: 15px; line-height: 20px; color: #000; }
.text b { color: #000; }
.text ol li { margin-left: -8px; padding-left: 8px; }
.site .text a { color: #800080; text-decoration: underline; }
footer { flex: none; height: 31px; padding-top: 4px; text-align: center; }

.taskbar { flex: none; height: 31px; display: flex; align-items: stretch; background: linear-gradient(#1f52b8 0, #3e86ee 3px, #245edb 8px, #245edb 26px, #1941a5 31px); color: #fff; }
.start { width: 97px; gap: 4px; justify-content: flex-start; padding-left: 10px; border-radius: 0 10px 12px 0; background: linear-gradient(#2b762b 0, #6fbf6f 3px, #3c9a3c 8px, #3a9a3a 24px, #236e23 31px); font: italic bold 17px "Open Sans", sans-serif; text-shadow: 1px 1px 1px #1c4a1c; }
.start svg { width: 20px; height: 20px; }
.tasks { display: flex; gap: 2px; padding: 4px 0 3px 9px; }
.tasks button { width: 159px; gap: 3px; padding-left: 9px; justify-content: flex-start; border-radius: 3px; background: linear-gradient(#5f9bf8 0, #3c81f3 4px, #3a7df0 22px); white-space: nowrap; }
.tasks .on { background: #1c4fb8; box-shadow: inset 1px 1px 1px #123a8c; }
.lang { align-self: center; margin-right: 13px; }
.tray { display: flex; align-items: center; gap: 2px; padding: 0 14px 0 6px; border-left: 1px solid #19b9f5; background: linear-gradient(#0d7fd0 0, #19b0f0 3px, #1290e8 8px, #118eea 26px, #0c62b8 31px); }
.tray time { margin-left: 6px; }
```
